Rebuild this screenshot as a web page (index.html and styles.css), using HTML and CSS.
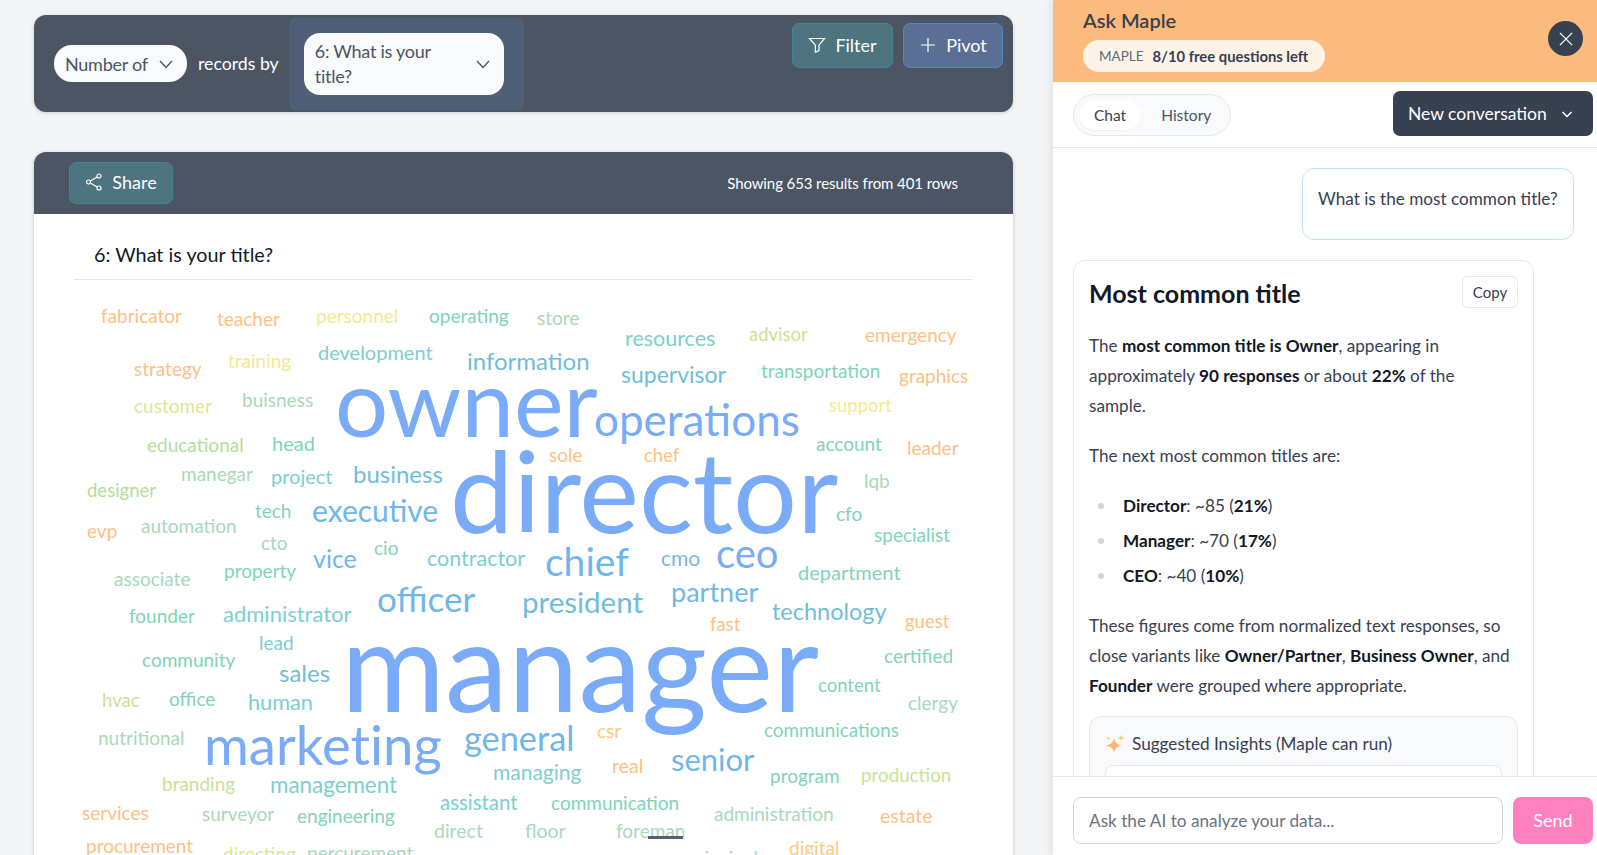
FILE: index.html
```html
<!DOCTYPE html>
<html lang="en">
<head>
<meta charset="utf-8">
<title>Ask Maple</title>
<link rel="stylesheet" href="styles.css">
</head>
<body>
<main class="main">
  <section class="toolbar">
    <div class="pill-select"><span>Number of</span><svg class="chev" viewBox="0 0 16 16"><path d="M2 5l6 6.500L14 5"/></svg></div>
    <span class="records">records by</span>
    <div class="hl">
      <div class="pill-select wide"><span>6: What is your title?</span><svg class="chev" viewBox="0 0 16 16"><path d="M2 5l6 6.500L14 5"/></svg></div>
    </div>
    <div class="tool-actions">
      <button class="btn teal"><svg class="ic" viewBox="0 0 18 18"><path d="M1.500 2.500h15L11 9.200v5.400l-3.600 1.800V9.200z"/></svg>Filter</button>
      <button class="btn indigo"><svg class="ic" viewBox="0 0 18 18"><path d="M9 2v14M2 9h14"/></svg>Pivot</button>
    </div>
  </section>

  <section class="viz">
    <header class="viz-head">
      <button class="btn teal share"><svg class="ic" viewBox="0 0 18 18"><circle cx="3.500" cy="9" r="2"/><circle cx="14" cy="3" r="2"/><circle cx="14" cy="15" r="2"/><path d="M5.300 8l6.900-4M5.300 10l6.900 4"/></svg>Share</button>
      <span class="showing">Showing 653 results from 401 rows</span>
    </header>
    <div class="viz-body">
      <h2 class="viz-title">6: What is your title?</h2>
      <div class="cloud">
        <span class="w orange" style="left:67px;top:44px;font-size:19px">fabricator</span>
        <span class="w orange" style="left:183px;top:47px;font-size:19px">teacher</span>
        <span class="w yellow" style="left:282px;top:44px;font-size:19px">personnel</span>
        <span class="w green" style="left:395px;top:44px;font-size:19px">operating</span>
        <span class="w sage" style="left:503px;top:46px;font-size:19px">store</span>
        <span class="w teal-t" style="left:284px;top:81px;font-size:20px">development</span>
        <span class="w orange" style="left:100px;top:97px;font-size:19px">strategy</span>
        <span class="w yellow" style="left:194px;top:89px;font-size:19px">training</span>
        <span class="w sky" style="left:433px;top:91px;font-size:24px">information</span>
        <span class="w teal-t" style="left:591px;top:68px;font-size:21.500px">resources</span>
        <span class="w lime" style="left:715px;top:62px;font-size:18.500px">advisor</span>
        <span class="w orange" style="left:831px;top:63px;font-size:19px">emergency</span>
        <span class="w sky" style="left:587px;top:104px;font-size:23px">supervisor</span>
        <span class="w green" style="left:727px;top:99px;font-size:19px">transportation</span>
        <span class="w orange" style="left:865px;top:104px;font-size:19px">graphics</span>
        <span class="w lime-l" style="left:100px;top:134px;font-size:19px">customer</span>
        <span class="w sage" style="left:208px;top:128px;font-size:19px">buisness</span>
        <span class="w blue" style="left:301px;top:158px;font-size:94px">owner</span>
        <span class="w blue" style="left:560px;top:157px;font-size:44px">operations</span>
        <span class="w yellow" style="left:795px;top:133px;font-size:18.500px">support</span>
        <span class="w lime-g" style="left:113px;top:173px;font-size:19px">educational</span>
        <span class="w green" style="left:238px;top:172px;font-size:20px">head</span>
        <span class="w green" style="left:782px;top:172px;font-size:19px">account</span>
        <span class="w orange" style="left:873px;top:176px;font-size:19px">leader</span>
        <span class="w orange" style="left:515px;top:183px;font-size:19px">sole</span>
        <span class="w orange" style="left:610px;top:183px;font-size:18.500px">chef</span>
        <span class="w sage" style="left:147px;top:202px;font-size:19px">manegar</span>
        <span class="w teal-t" style="left:237px;top:205px;font-size:20px">project</span>
        <span class="w sky" style="left:319px;top:204px;font-size:24px">business</span>
        <span class="w lime-g" style="left:53px;top:218px;font-size:18.500px">designer</span>
        <span class="w blue" style="left:416px;top:254px;font-size:113px">director</span>
        <span class="w sage" style="left:830px;top:209px;font-size:19px">lqb</span>
        <span class="w green" style="left:221px;top:239px;font-size:19px">tech</span>
        <span class="w sky-b" style="left:278px;top:243px;font-size:30px">executive</span>
        <span class="w green" style="left:802px;top:242px;font-size:19px">cfo</span>
        <span class="w green" style="left:840px;top:263px;font-size:19px">specialist</span>
        <span class="w orange" style="left:53px;top:259px;font-size:19px">evp</span>
        <span class="w sage" style="left:107px;top:254px;font-size:19px">automation</span>
        <span class="w sage" style="left:227px;top:271px;font-size:19px">cto</span>
        <span class="w sky-b" style="left:279px;top:289px;font-size:25px">vice</span>
        <span class="w green" style="left:340px;top:276px;font-size:19px">cio</span>
        <span class="w teal-t" style="left:393px;top:288px;font-size:21.500px">contractor</span>
        <span class="w sky-b" style="left:511px;top:298px;font-size:39px">chief</span>
        <span class="w sky" style="left:627px;top:287px;font-size:21px">cmo</span>
        <span class="w blue" style="left:682px;top:289px;font-size:40px">ceo</span>
        <span class="w green" style="left:764px;top:301px;font-size:20px">department</span>
        <span class="w sage" style="left:80px;top:307px;font-size:19px">associate</span>
        <span class="w green" style="left:190px;top:299px;font-size:19px">property</span>
        <span class="w green" style="left:95px;top:344px;font-size:19px">founder</span>
        <span class="w teal-t" style="left:189px;top:344px;font-size:22px">administrator</span>
        <span class="w sky-b" style="left:343px;top:333px;font-size:35px">officer</span>
        <span class="w sky" style="left:488px;top:334px;font-size:29.500px">president</span>
        <span class="w sky-b" style="left:637px;top:323px;font-size:27px">partner</span>
        <span class="w sky" style="left:738px;top:342px;font-size:23.500px">technology</span>
        <span class="w orange" style="left:676px;top:352px;font-size:18.500px">fast</span>
        <span class="w orange" style="left:871px;top:349px;font-size:18.500px">guest</span>
        <span class="w teal-t" style="left:225px;top:371px;font-size:19px">lead</span>
        <span class="w green" style="left:850px;top:384px;font-size:19px">certified</span>
        <span class="w green" style="left:108px;top:388px;font-size:19px">community</span>
        <span class="w sky" style="left:245px;top:403px;font-size:24px">sales</span>
        <span class="w blue" style="left:307px;top:433px;font-size:126.500px">manager</span>
        <span class="w green" style="left:784px;top:413px;font-size:18.500px">content</span>
        <span class="w lime" style="left:68px;top:428px;font-size:18.500px">hvac</span>
        <span class="w green" style="left:135px;top:427px;font-size:19px">office</span>
        <span class="w teal-t" style="left:214px;top:432px;font-size:21.700px">human</span>
        <span class="w sage" style="left:874px;top:431px;font-size:19px">clergy</span>
        <span class="w sage" style="left:64px;top:466px;font-size:19px">nutritional</span>
        <span class="w blue nolig" style="left:170px;top:486px;font-size:54.500px">marketing</span>
        <span class="w sky-b" style="left:430px;top:472px;font-size:34.300px">general</span>
        <span class="w orange-y" style="left:563px;top:459px;font-size:19px">csr</span>
        <span class="w green" style="left:730px;top:459px;font-size:18.800px">communications</span>
        <span class="w orange" style="left:578px;top:494px;font-size:19.500px">real</span>
        <span class="w sky-b" style="left:637px;top:492px;font-size:31px">senior</span>
        <span class="w teal-t" style="left:459px;top:501px;font-size:21px">managing</span>
        <span class="w green" style="left:736px;top:504px;font-size:19px">program</span>
        <span class="w lime" style="left:827px;top:504px;font-size:18.800px">production</span>
        <span class="w lime" style="left:128px;top:512px;font-size:19px">branding</span>
        <span class="w teal-t" style="left:236px;top:515px;font-size:22.400px">management</span>
        <span class="w orange" style="left:48px;top:541px;font-size:19px">services</span>
        <span class="w sage" style="left:168px;top:542px;font-size:19px">surveyor</span>
        <span class="w green" style="left:263px;top:544px;font-size:19px">engineering</span>
        <span class="w teal-t" style="left:406px;top:531px;font-size:20.400px">assistant</span>
        <span class="w green" style="left:517px;top:531px;font-size:19px">communication</span>
        <span class="w sage" style="left:680px;top:542px;font-size:19px">administration</span>
        <span class="w orange" style="left:846px;top:544px;font-size:19.500px">estate</span>
        <span class="w sage" style="left:400px;top:559px;font-size:19.500px">direct</span>
        <span class="w sage" style="left:491px;top:559px;font-size:19.500px">floor</span>
        <span class="w sage" style="left:582px;top:559px;font-size:19px">foreman</span>
        <span class="w orange" style="left:52px;top:574px;font-size:19px">procurement</span>
        <span class="w lime-l" style="left:189px;top:582px;font-size:19px">directing</span>
        <span class="w sage" style="left:273px;top:581px;font-size:19px">percurement</span>
        <span class="w sage" style="left:653px;top:586px;font-size:19px">principal</span>
        <span class="w orange-y" style="left:755px;top:576px;font-size:19px">digital</span>
      </div>
    </div>
  </section>
  <div class="grab"></div>
</main>

<aside class="panel">
  <header class="panel-head">
    <div>
      <h1 class="panel-title">Ask Maple</h1>
      <div class="quota"><span class="quota-tag">MAPLE</span><span class="quota-text">8/10 free questions left</span></div>
    </div>
    <button class="close" aria-label="Close"><svg viewBox="0 0 16 16"><path d="M1 1l14 14M15 1L1 15"/></svg></button>
  </header>
  <div class="panel-tabs">
    <div class="tabs"><span class="tab active">Chat</span><span class="tab">History</span></div>
    <button class="new-conv">New conversation<svg viewBox="0 0 12 12"><path d="M1.500 4l4.500 4.500L10.500 4"/></svg></button>
  </div>
  <div class="chat">
    <div class="user-msg">What is the most common title?</div>
    <article class="answer">
      <div class="answer-head">
        <h3 class="answer-title">Most common title</h3>
        <button class="copy">Copy</button>
      </div>
      <p>The <b>most common title is Owner</b>, appearing in approximately <b>90 responses</b> or about <b>22%</b> of the<br>sample.</p>
      <p>The next most common titles are:</p>
      <ul>
        <li><b>Director</b>: ~85 (<b>21%</b>)</li>
        <li><b>Manager</b>: ~70 (<b>17%</b>)</li>
        <li><b>CEO</b>: ~40 (<b>10%</b>)</li>
      </ul>
      <p class="last">These figures come from normalized text responses, so close variants like <b>Owner/Partner</b>, <b>Business Owner</b>, and <b>Founder</b> were grouped where appropriate.</p>
      <div class="insights">
        <div class="insights-title"><svg viewBox="0 0 20 20"><path class="s1" d="M9 3.500c.9 5 2.800 7 8 8-5.200 1-7.100 3-8 8-.9-5-2.800-7-8-8 5.200-1 7.100-3 8-8z"/><path class="s2" d="M16 .5c.4 2.200 1.300 3.100 3.500 3.500-2.200.4-3.100 1.300-3.500 3.500-.4-2.200-1.300-3.100-3.500-3.500 2.200-.4 3.100-1.300 3.500-3.500z"/><path class="s2" d="M3.500 2c.3 1.500.8 2 2.300 2.300-1.500.3-2 .8-2.300 2.300-.3-1.500-.8-2-2.300-2.300 1.500-.3 2-.8 2.300-2.300z"/></svg>Suggested Insights (Maple can run)</div>
        <div class="insight-item"></div>
      </div>
    </article>
  </div>
  <footer class="composer">
    <div class="ask">Ask the AI to analyze your data...</div>
    <button class="send">Send</button>
  </footer>
</aside>
</body>
</html>
```

FILE: styles.css
```css
* { box-sizing: border-box; }
html, body { height: 100%; }
body {
  margin: 0;
  height: 855px;
  overflow: hidden;
  display: flex;
  background: #f3f4f6;
  font-family: Lato, "Noto Sans", sans-serif;
  color: #374151;
}
button { font-family: inherit; cursor: pointer; }

.main {
  position: relative;
  width: 1053px;
  flex: none;
  padding: 15px 40px 0 34px;
  overflow: hidden;
}

.toolbar {
  display: flex;
  align-items: center;
  height: 97px;
  padding-left: 20px;
  background: #4b5563;
  border-radius: 12px;
  box-shadow: 0 1px 4px rgba(0,0,0,.15);
  color: #fff;
  font-size: 17.700px;
}
.pill-select {
  display: flex;
  align-items: center;
  justify-content: space-between;
  height: 37px;
  width: 133px;
  padding: 0 13px 0 11px;
  background: #f9fafb;
  border-radius: 18px;
  color: #4b5563;
  font-size: 18px;
  letter-spacing: -.25px;
}
.pill-select.wide {
  width: 200px;
  height: 62px;
  line-height: 25px;
  border-radius: 16px;
}
.pill-select.wide span { width: 130px; }
.chev { width: 16px; height: 16px; fill: none; stroke: #4b5563; stroke-width: 1.3; }
.records { margin-left: 11px; }
.hl {
  display: flex;
  align-items: center;
  height: 92px;
  width: 235px;
  margin-left: 10px;
  padding-left: 15px;
  background: #4f5f78;
  border-radius: 6px;
}
.tool-actions {
  display: flex;
  gap: 10px;
  align-self: flex-start;
  margin: 8px 10px 0 auto;
}
.btn {
  display: flex;
  align-items: center;
  justify-content: center;
  gap: 9px;
  width: 101px;
  height: 45px;
  padding: 0 0 2px;
  border-radius: 7px;
  color: #fff;
  font-size: 18px;
}
.btn.indigo { width: 100px; }
.btn.teal { background: #4d747f; border: 1px solid #3b8a92; }
.btn.indigo { background: #5a6f93; border: 1px solid #5b86c4; }
.ic { width: 18px; height: 18px; fill: none; stroke: #fff; stroke-width: 1.2; }

.viz {
  margin-top: 40px;
  height: 720px;
  background: #fff;
  border-radius: 12px 12px 0 0;
  box-shadow: 0 1px 4px rgba(0,0,0,.2);
  overflow: hidden;
}
.viz-head {
  display: flex;
  align-items: center;
  justify-content: space-between;
  height: 62px;
  padding: 0 55px 0 35px;
  background: #4b5563;
  color: #fff;
}
.btn.share { width: 104px; height: 42px; }
.showing { font-size: 15px; letter-spacing: -.1px; }
.viz-body { padding: 0 40px; }
.viz-title {
  margin: 0;
  height: 66px;
  padding: 27px 0 0 20px;
  border-bottom: 1px solid #e5e7eb;
  color: #111827;
  font-size: 19.800px;
  font-weight: 400;
  line-height: 26px;
}
.cloud { position: relative; height: 576px; margin: -1px -40px 0; }
.w {
  position: absolute;
  left: 0;
  line-height: 1;
  white-space: nowrap;
  transform: translateY(-.887em);
}
.nolig { font-variant-ligatures: none; }
.blue { color: #79abf9; }
.sky-b { color: #6fb6ea; }
.sky { color: #70bddb; }
.teal-t { color: #7bcfcf; }
.green { color: #80d3b9; }
.sage { color: #a8d9b8; }
.lime-g { color: #b2dd9e; }
.lime { color: #c8e394; }
.lime-l { color: #dde793; }
.yellow { color: #f4e98f; }
.orange-y { color: #fccb82; }
.orange { color: #fdbf84; }

.grab {
  position: absolute;
  left: 648px;
  top: 836px;
  width: 35px;
  height: 3px;
  background: #5a5f6b;
}

.panel {
  display: flex;
  flex-direction: column;
  width: 544px;
  height: 855px;
  background: #fff;
  box-shadow: -4px 0 8px rgba(0,0,0,.06);
}
.panel-head {
  display: flex;
  justify-content: space-between;
  align-items: flex-start;
  flex: none;
  height: 82px;
  padding: 8px 14px 0 30px;
  background: #fdba7d;
}
.panel-title {
  margin: 0 0 8px;
  font-size: 20px;
  font-weight: 600;
  line-height: 24px;
  color: #374151;
}
.quota {
  display: flex;
  align-items: center;
  gap: 9px;
  width: 242px;
  height: 32px;
  padding-left: 16px;
  background: #fef3e7;
  border-radius: 17px;
}
.quota-tag { color: #5b6b78; font-size: 13.500px; }
.quota-text { font-weight: 700; color: #374151; font-size: 14.800px; }
.close {
  display: flex;
  align-items: center;
  justify-content: center;
  width: 35px;
  height: 35px;
  margin-top: 13px;
  padding: 0;
  border: 0;
  border-radius: 50%;
  background: #374151;
}
.close svg { width: 14px; height: 14px; fill: none; stroke: #fff; stroke-width: 1.500; }

.panel-tabs {
  display: flex;
  align-items: center;
  justify-content: space-between;
  flex: none;
  height: 66px;
  padding: 0 4px 2px 20px;
  border-bottom: 1px solid #e5e7eb;
}
.tabs {
  display: flex;
  align-items: center;
  width: 158px;
  height: 42px;
  margin-top: 2px;
  padding: 0 5px;
  background: #f9fafb;
  border: 1px solid #e5e7eb;
  border-radius: 22px;
  font-size: 15.500px;
}
.tab { padding: 0 0 0 20px; line-height: 30px; color: #4b5563; }
.tab.active { padding: 0 15px; background: #fff; border-radius: 16px; color: #374151; box-shadow: 0 1px 2px rgba(0,0,0,.04); }
.new-conv {
  display: flex;
  align-items: center;
  justify-content: space-between;
  width: 200px;
  height: 45px;
  padding: 0 20px 0 15px;
  border: 0;
  border-radius: 7px;
  background: #374151;
  color: #fff;
  font-size: 17.500px;
}
.new-conv svg { width: 12px; height: 12px; fill: none; stroke: #fff; stroke-width: 1.500; }

.chat { flex: 1; min-height: 0; overflow: hidden; padding: 20px 23px 0 20px; }
.user-msg {
  width: 272px;
  height: 72px;
  margin-left: auto;
  padding: 17px 15px;
  background: #fff;
  border: 1px solid #bae6fd;
  border-radius: 12px;
  font-size: 17.150px;
  line-height: 26px;
  white-space: nowrap;
}
.answer {
  width: 461px;
  margin-top: 20px;
  padding: 15px 15px 0 15px;
  border: 1px solid #e5e7eb;
  border-radius: 12px;
  font-size: 17.150px;
  line-height: 30px;
}
.answer-head { display: flex; justify-content: space-between; align-items: flex-start; margin-bottom: 21px; }
.answer-title { margin: 0; font-size: 25px; font-weight: 700; line-height: 34px; color: #111827; }
.copy {
  width: 56px;
  height: 32px;
  padding: 0;
  background: #fff;
  border: 1px solid #e5e7eb;
  border-radius: 5px;
  color: #374151;
  font-size: 15px;
}
.answer p { margin: 0 0 20px; }
.answer p.last { margin-bottom: 15px; }
.answer b { color: #111827; font-weight: 700; }
.answer ul { margin: 0 0 20px; padding: 0; list-style: none; }
.answer li { position: relative; margin-bottom: 5px; padding-left: 34px; }
.answer li::before {
  content: "";
  position: absolute;
  left: 9px;
  top: 12px;
  width: 6px;
  height: 6px;
  border-radius: 50%;
  background: #d1d5db;
}
.insights {
  height: 120px;
  padding: 12px 15px;
  background: #f9fafb;
  border: 1px solid #e5e7eb;
  border-radius: 12px;
}
.insights-title { display: flex; align-items: center; gap: 7px; height: 30px; font-size: 17.150px; }
.insights-title svg { width: 20px; height: 20px; flex: none; }
.s1 { fill: #fdb777; }
.s2 { fill: #fccb8e; }
.insight-item {
  height: 60px;
  margin-top: 6px;
  background: #fff;
  border: 1px solid #e5e7eb;
  border-radius: 8px;
}
.composer {
  display: flex;
  gap: 10px;
  flex: none;
  height: 79px;
  padding: 20px 4px 0 20px;
  background: #fff;
  border-top: 1px solid #e5e7eb;
}
.ask {
  width: 430px;
  height: 47px;
  padding-left: 15px;
  border: 1px solid #d1d5db;
  border-radius: 8px;
  color: #6b7280;
  font-size: 17.200px;
  line-height: 45px;
}
.send {
  width: 80px;
  height: 47px;
  padding-bottom: 2px;
  border: 0;
  border-radius: 8px;
  background: #ff80bf;
  color: #fff;
  font-size: 18px;
}
```
